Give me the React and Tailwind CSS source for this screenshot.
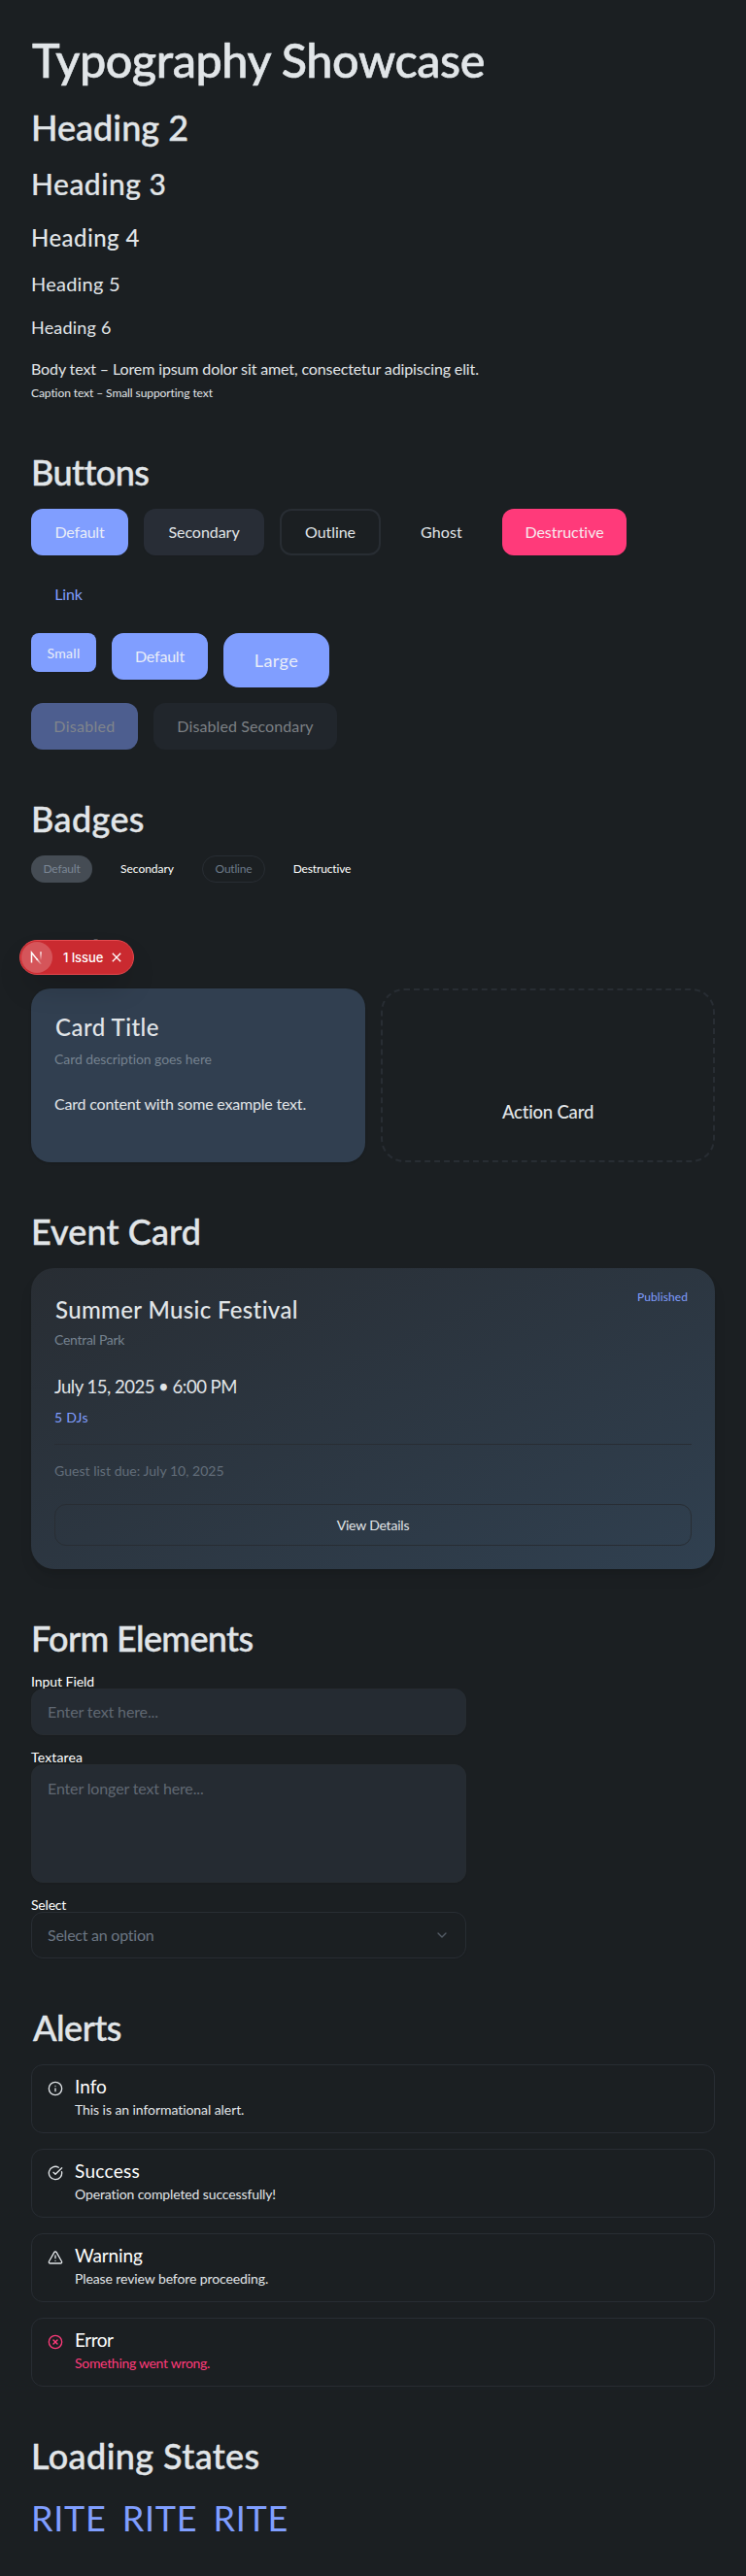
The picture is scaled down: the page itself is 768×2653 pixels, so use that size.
import React from "react";
import { Info, CircleCheckBig, TriangleAlert, CircleX, ChevronDown } from "lucide-react";

function SectionTitle({ className = "", children }) {
  return (
    <h2
      className={
        "mb-[17px] h-11 text-[36px] leading-[46px] font-medium text-[#e1e5e8] [-webkit-text-stroke:0.4px_#e1e5e8] " +
        className
      }
    >
      {children}
    </h2>
  );
}

const buttonVariants = {
  primary: "bg-[#809eff] text-[#e9edf8] shadow-xs",
  secondary: "bg-[#282d36] text-[#e1e5e8] shadow-xs",
  outline: "border-2 border-[#282d33] text-[#e1e5e8]",
  ghost: "text-[#e1e5e8]",
  destructive: "bg-[#ff3a7a] text-[#f7e9ee] shadow-xs",
  link: "text-[#809eff]",
  disabled: "bg-[#4d5e8f] text-[#80858c]",
  disabledSecondary: "bg-[#21262c] text-[#7c8084]",
};

const buttonSizes = {
  sm: "h-10 rounded-lg text-[14px]",
  md: "h-12 rounded-xl text-[16px]",
  lg: "h-14 rounded-2xl text-[18px]",
};

function Button({ variant = "primary", size = "md", className = "", children }) {
  return (
    <button
      type="button"
      className={"flex items-center justify-center " + buttonSizes[size] + " " + buttonVariants[variant] + " " + className}
    >
      {children}
    </button>
  );
}

function Badge({ className = "", children }) {
  return (
    <span className={"flex h-7 items-center justify-center rounded-full text-[12px] " + className}>{children}</span>
  );
}

function Alert({ icon: Icon, title, titleClass = "", text, textClass = "", iconClass = "text-[#e1e5e8]" }) {
  return (
    <div className="flex h-[71px] gap-[13px] rounded-xl border border-[#282d33] px-4">
      <Icon className={"mt-4 size-4 shrink-0 " + iconClass} strokeWidth={2} />
      <div className="-ml-px pt-[9px]">
        <div className={"h-[27px] text-[19px] leading-[25px] text-white " + titleClass}>{title}</div>
        <div className={"h-5 text-[14px] leading-5 " + textClass}>{text}</div>
      </div>
    </div>
  );
}

function DevToast() {
  return (
    <div className="absolute top-[968px] left-5 flex h-9 w-[118px] items-center rounded-full border border-[#e5484d] bg-[#ca2a30] pl-px font-['Inter',sans-serif] text-white shadow-[0_16px_32px_-8px_rgba(0,0,0,0.24)]">
      <span className="flex size-8 shrink-0 items-center justify-center rounded-full bg-[#d5555a]">
        <svg width="14" height="14" viewBox="0 0 14 14" fill="none">
          <defs>
            <linearGradient id="stem" x1="0" y1="1" x2="0" y2="10" gradientUnits="userSpaceOnUse">
              <stop stopColor="#fff" />
              <stop offset="1" stopColor="#fff" stopOpacity="0" />
            </linearGradient>
            <linearGradient id="diag" x1="7" y1="7" x2="13" y2="14" gradientUnits="userSpaceOnUse">
              <stop stopColor="#fff" />
              <stop offset="1" stopColor="#fff" stopOpacity="0" />
            </linearGradient>
          </defs>
          <path d="M1.5 12.5V2L7.6 9.6" stroke="#fff" strokeWidth="1.5" />
          <path d="M6.8 8.6L11.6 14.4" stroke="url(#diag)" strokeWidth="1.5" />
          <path d="M11 1.2V10" stroke="url(#stem)" strokeWidth="1.5" />
        </svg>
      </span>
      <span className="ml-[11px] text-[13px] leading-none font-medium tracking-[-0.1px] whitespace-nowrap">1 Issue</span>
      <svg className="ml-[9px] shrink-0" width="10" height="10" viewBox="0 0 10 10" fill="none">
        <path d="M0.8 0.8L9.2 9.2M9.2 0.8L0.8 9.2" stroke="#fff" strokeWidth="1.3" />
      </svg>
    </div>
  );
}

export default function App() {
  return (
    <div className="relative h-[2653px] w-full overflow-hidden bg-[#1b1f22] px-8 pt-[33px] font-['Lato',sans-serif] whitespace-nowrap text-[#e1e5e8]">
      <section>
        <h1 className="h-14 pl-px text-[48.5px] leading-[56px] font-medium tracking-[-0.42px] [-webkit-text-stroke:0.6px_#e1e5e8]">
          Typography Showcase
        </h1>
        <h2 className="mt-5 h-11 text-[36px] leading-[44px] font-medium tracking-[0.02px] [-webkit-text-stroke:0.4px_#e1e5e8]">
          Heading 2
        </h2>
        <h3 className="mt-[18px] h-9 text-[30px] leading-[37px] font-medium tracking-[0.5px] [-webkit-text-stroke:0.2px_#e1e5e8]">
          Heading 3
        </h3>
        <h4 className="mt-[23px] h-[30px] text-[24px] leading-[30px] font-medium tracking-[0.43px]">Heading 4</h4>
        <h5 className="mt-5 h-[26px] text-[20px] leading-[25px] tracking-[0.23px]">Heading 5</h5>
        <h6 className="mt-5 h-6 text-[18px] leading-[23px] tracking-[0.2px]">Heading 6</h6>
        <p className="mt-[18px] h-6 text-[16px] leading-[23px] tracking-[-0.12px]">
          Body text – Lorem ipsum dolor sit amet, consectetur adipiscing elit.
        </p>
        <p className="mt-[5px] h-[18px] text-[12px] leading-4 tracking-[-0.08px]">Caption text – Small supporting text</p>
      </section>

      <section className="mt-12">
        <SectionTitle className="tracking-[-0.57px]">Buttons</SectionTitle>
        <div className="flex flex-wrap gap-4">
          <Button className="w-[100px] tracking-[-0.19px]">Default</Button>
          <Button variant="secondary" className="w-[124px] tracking-[-0.04px]">Secondary</Button>
          <Button variant="outline" className="w-[104px] tracking-[-0.06px]">Outline</Button>
          <Button variant="ghost" className="w-[93px] tracking-[0.11px]">Ghost</Button>
          <Button variant="destructive" className="w-32 tracking-[-0.04px]">Destructive</Button>
          <Button variant="link" className="w-[77px] tracking-[-0.16px]">Link</Button>
        </div>
        <div className="mt-4 flex items-start gap-4">
          <Button size="sm" className="w-[67px] tracking-[0.32px]">Small</Button>
          <Button className="w-[99px] tracking-[-0.19px]">Default</Button>
          <Button size="lg" className="w-[109px] tracking-[0.44px]">Large</Button>
        </div>
        <div className="mt-4 flex gap-4">
          <Button variant="disabled" className="w-[110px] tracking-[0.3px]">Disabled</Button>
          <Button variant="disabledSecondary" className="w-[189px] tracking-[0.1px]">Disabled Secondary</Button>
        </div>
      </section>

      <section className="mt-12">
        <SectionTitle className="tracking-[0.4px]">Badges</SectionTitle>
        <div className="flex gap-4">
          <Badge className="w-[63px] bg-[#454c54] tracking-[-0.17px] text-[#7b8794]">Default</Badge>
          <Badge className="w-[81px] tracking-[-0.04px] text-white">Secondary</Badge>
          <Badge className="w-[65px] border border-[#282d33] tracking-[-0.2px] text-[#6c7a89]">Outline</Badge>
          <Badge className="w-[85px] tracking-[-0.15px] text-white">Destructive</Badge>
        </div>
      </section>

      <section className="mt-12">
        <SectionTitle>
          <span className="text-[34px]">Cards</span>
        </SectionTitle>
        <div className="grid grid-cols-2 gap-4">
          <div className="h-[179px] rounded-[20px] bg-[#313f50] px-6 pt-[25px] shadow-sm">
            <h3 className="h-[30px] pl-px text-[24px] leading-[30px] font-medium tracking-[0.47px]">Card Title</h3>
            <p className="mt-2 h-5 text-[14px] leading-[19px] tracking-[-0.08px] text-[#75828f]">Card description goes here</p>
            <p className="mt-6 h-6 text-[16px] leading-6 tracking-[-0.2px]">Card content with some example text.</p>
          </div>
          <div className="flex h-[179px] justify-center rounded-[24px] border-2 border-dashed border-[#282d33] pt-[113px] text-[18.5px] leading-6 font-medium tracking-[-0.2px]">
            Action Card
          </div>
        </div>
      </section>

      <section className="mt-12">
        <SectionTitle className="tracking-[0.1px]">Event Card</SectionTitle>
        <div className="h-[310px] rounded-[24px] bg-linear-to-br from-[#282d33] to-[#304050] px-6 pt-7 shadow-lg">
          <div className="flex justify-between">
            <h3 className="h-[30px] pl-px text-[24px] leading-[30px] font-medium tracking-[0.35px]">Summer Music Festival</h3>
            <span className="-mt-[6px] mr-1 h-4 text-[12px] leading-4 tracking-[0.1px] text-[#809eff]">Published</span>
          </div>
          <p className="mt-[6px] h-5 text-[14px] leading-5 tracking-[-0.28px] text-[#75828f]">Central Park</p>
          <p className="mt-[26px] h-6 text-[18.5px] leading-[25px] tracking-[-0.5px]">July 15, 2025 • 6:00 PM</p>
          <p className="mt-[10px] h-5 text-[14px] leading-5 tracking-[0.25px] text-[#809eff]">5 DJs</p>
          <div className="mt-[17px] border-t border-[#282d33] pt-4">
            <p className="h-5 text-[14px] leading-[21px] tracking-[0.03px] text-[#636e7a]">Guest list due: July 10, 2025</p>
          </div>
          <button
            type="button"
            className="mt-[25px] flex h-[43px] w-full items-center justify-center rounded-xl border border-[#282d33] text-[14px] tracking-[-0.2px]"
          >
            View Details
          </button>
        </div>
      </section>

      <section className="mt-12">
        <SectionTitle className="tracking-[-0.66px]">Form Elements</SectionTitle>
        <div className="flex w-[448px] flex-col gap-4">
          <div>
            <label className="block h-3.5 text-[14px] leading-3.5 tracking-[-0.05px] text-white">Input Field</label>
            <div className="flex h-12 items-center rounded-xl border border-[#272c31] bg-[#252b32] px-4 text-[16px] tracking-[-0.12px] text-[#606872] shadow-xs">
              Enter text here...
            </div>
          </div>
          <div>
            <label className="block h-3.5 text-[14px] leading-3.5 tracking-[0.15px] text-white">Textarea</label>
            <div className="h-[122px] rounded-xl border border-[#272c31] bg-[#252b32] px-4 pt-3 text-[16px] leading-6 tracking-[-0.14px] text-[#606872] shadow-xs">
              Enter longer text here...
            </div>
          </div>
          <div>
            <label className="block h-3.5 text-[14px] leading-3.5 tracking-[-0.2px] text-white">Select</label>
            <div className="flex h-12 items-center justify-between rounded-xl border border-[#282d33] px-4 text-[16px] tracking-[-0.24px] text-[#6c7683] shadow-xs">
              Select an option
              <ChevronDown className="size-4 text-[#545c66]" strokeWidth={2} />
            </div>
          </div>
        </div>
      </section>

      <section className="mt-12">
        <SectionTitle className="pl-[2px] tracking-[-0.5px]">Alerts</SectionTitle>
        <div className="flex flex-col gap-4">
          <Alert icon={Info} title="Info" text="This is an informational alert." textClass="tracking-[-0.07px]" />
          <Alert
            icon={CircleCheckBig}
            title="Success"
            titleClass="tracking-[0.29px]"
            text="Operation completed successfully!"
            textClass="tracking-[-0.12px]"
          />
          <Alert
            icon={TriangleAlert}
            title="Warning"
            titleClass="tracking-[-0.12px]"
            text="Please review before proceeding."
            textClass="tracking-[-0.1px]"
          />
          <Alert
            icon={CircleX}
            iconClass="text-[#ff3a7a]"
            title="Error"
            titleClass="tracking-[-0.48px]"
            text="Something went wrong."
            textClass="tracking-[-0.3px] text-[#ff3a7a]"
          />
        </div>
      </section>

      <section className="mt-12">
        <SectionTitle className="tracking-[0.4px]">Loading States</SectionTitle>
        <div className="flex h-[52px] text-[36px] leading-[53px] tracking-[0.7px] text-[#809eff]">
          <span className="w-[93.75px]">RITE</span>
          <span className="w-[93.75px]">RITE</span>
          <span>RITE</span>
        </div>
      </section>

      <DevToast />
    </div>
  );
}
